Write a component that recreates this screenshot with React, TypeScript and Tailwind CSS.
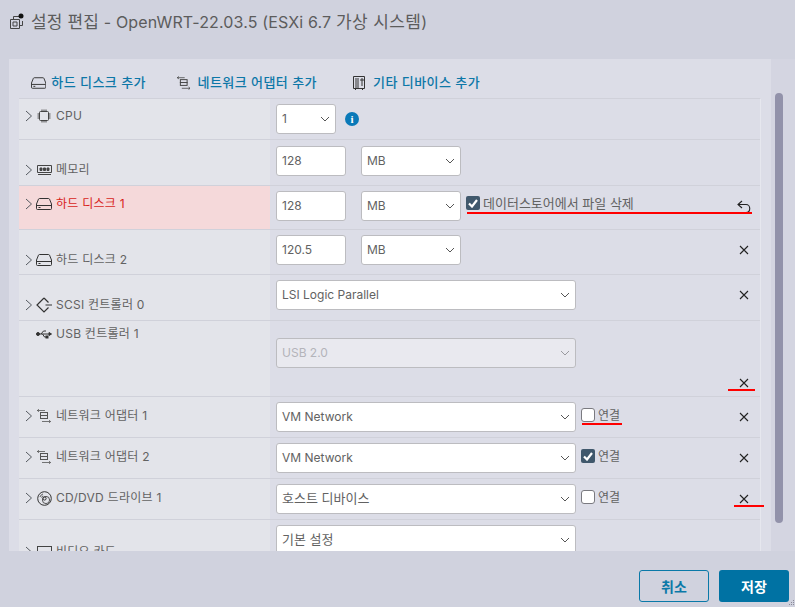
import React from 'react';

const FONT = "font-['Inter','Noto_Sans_CJK_KR',sans-serif]";

const Chevron = () => (
  <svg width="8" height="12" viewBox="0 0 8 12" fill="none" stroke="#555a60" strokeWidth="1" className="shrink-0">
    <path d="M1 1l5.5 5L1 11" />
  </svg>
);

const DiskIcon = ({ size = 16 }: { size?: number }) => (
  <svg width={size} height={size} viewBox="0 0 16 16" fill="none" stroke="#333" strokeWidth="1">
    <path d="M3.5 2.5h9c.5 0 .8.2 1 .6L15.5 8v4.5a1 1 0 0 1-1 1h-13a1 1 0 0 1-1-1V8l2-4.9c.2-.4.5-.6 1-.6z" />
    <path d="M.8 9.5h14.4" />
    <path d="M2.5 11.5h2" />
  </svg>
);

const CpuIcon = () => (
  <svg width="14" height="14" viewBox="0 0 14 14" fill="none" stroke="#444" strokeWidth="1">
    <rect x="2.5" y="2.5" width="9" height="9" rx="1" />
    <path d="M5 .5v2M7 .5v2M9 .5v2M5 11.5v2M7 11.5v2M9 11.5v2M.5 5h2M.5 7h2M.5 9h2M11.5 5h2M11.5 7h2M11.5 9h2" />
  </svg>
);

const MemoryIcon = () => (
  <svg width="15" height="10" viewBox="0 0 15 10" fill="none" stroke="#444" strokeWidth="1">
    <path d="M.5.5h14v7h-14zM1 9.5h13" />
    <path d="M3 3h2v2.5H3zM6.5 3h2v2.5h-2zM10 3h2v2.5h-2z" fill="#444" />
  </svg>
);

const ScsiIcon = () => (
  <svg width="16" height="16" viewBox="0 0 16 16" fill="none" stroke="#333" strokeWidth="1.2">
    <path d="M8 1L1 8l7 7 4.5-4.5M8 1l4.5 4.5M9.5 8H16" />
  </svg>
);

const UsbIcon = () => (
  <svg width="16" height="10" viewBox="0 0 16 10" fill="none" stroke="#333" strokeWidth="1">
    <path d="M2 5h12" />
    <circle cx="2" cy="5" r="1.5" fill="#333" />
    <path d="M13 3.5L15.5 5 13 6.5z" fill="#333" />
    <path d="M5 5l2.5-3H10M6.5 5l2 3h2" />
    <rect x="10" y="7" width="2" height="2" fill="#333" />
  </svg>
);

const NetworkIcon = ({ color = '#555' }: { color?: string }) => (
  <svg width="14" height="14" viewBox="0 0 14 14" fill="none" stroke={color} strokeWidth="1">
    <rect x="3.5" y="3.5" width="7" height="6" />
    <path d="M3 6.5h8" />
    <path d="M0 1.5h8M2 .2L.4 1.5 2 2.8" strokeWidth="0.8" />
    <path d="M5 12.5h8.5M12 11.2l1.6 1.3-1.6 1.3" strokeWidth="0.8" />
  </svg>
);

const DiscIcon = () => (
  <svg width="15" height="15" viewBox="0 0 15 15" fill="none" stroke="#333" strokeWidth="1">
    <circle cx="7.5" cy="7.5" r="6.8" />
    <circle cx="7.5" cy="7.5" r="1.6" />
    <circle cx="9" cy="9" r="3.6" strokeWidth="0.8" />
    <path d="M3 6c.5-1.5 1.5-2.5 3-3M4.5 6.5c.3-.8.8-1.3 1.6-1.6" strokeWidth="0.8" />
  </svg>
);

const MonitorIcon = () => (
  <svg width="15" height="13" viewBox="0 0 15 13" fill="none" stroke="#444" strokeWidth="1">
    <rect x=".5" y=".5" width="14" height="12" />
  </svg>
);

const OtherIcon = () => (
  <svg width="14" height="14" viewBox="0 0 14 14" fill="none" stroke="#333" strokeWidth="1">
    <path d="M1.5.5h11v12h-11zM3 13.5h1M10 13.5h1" />
    <path d="M3 3h4M3 5h4M3 7h4M3 9h4M3 11h4M9 3h2v2H9zM9 7h2M9 9h2" />
  </svg>
);

const CloseIcon = () => (
  <svg width="10" height="10" viewBox="0 0 10 10" stroke="#222" strokeWidth="1.1" fill="none">
    <path d="M1 1l8 8M9 1l-8 8" />
  </svg>
);

const UndoIcon = () => (
  <svg width="14" height="14" viewBox="0 0 14 14" fill="none" stroke="#222" strokeWidth="1.1">
    <path d="M5 1L1 4.5 5 8" />
    <path d="M1 4.5h8c5 0 5 8 0 8" />
  </svg>
);

const Caret = ({ disabled }: { disabled?: boolean }) => (
  <svg width="10" height="6" viewBox="0 0 10 6" fill="none" stroke={disabled ? '#9a9a9f' : '#555'} strokeWidth="1">
    <path d="M1 1l4 4 4-4" />
  </svg>
);

const Select = ({ value, width, disabled, textSize = 'text-[12px]' }: { value: string; width: string; disabled?: boolean; textSize?: string }) => (
  <div
    className={`${width} ${textSize} h-[30px] shrink-0 flex items-center justify-between pl-[5px] pr-[5px] rounded-[3px] border border-[#bcbcc0] ${
      disabled ? 'bg-[#e9e9ef] text-[#b4b4ba]' : 'bg-white text-[#626262]'
    }`}
  >
    <span>{value}</span>
    <Caret disabled={disabled} />
  </div>
);

const Input = ({ value }: { value: string }) => (
  <div className="w-[70px] h-[30px] shrink-0 flex items-center pl-[5px] rounded-[3px] border border-[#bcbcc0] bg-white text-[12px] text-[#626262]">
    {value}
  </div>
);

const Check = ({ checked }: { checked?: boolean }) =>
  checked ? (
    <span className="w-[14px] h-[14px] rounded-[2px] bg-[#40586c] flex items-center justify-center shrink-0">
      <svg width="10" height="9" viewBox="0 0 10 9" fill="none" stroke="#fff" strokeWidth="2.2">
        <path d="M1 4.5l3 3 5-6.5" />
      </svg>
    </span>
  ) : (
    <span className="w-[14px] h-[14px] rounded-[3px] bg-white border border-[#7a7a80] shrink-0" />
  );

const Mark = ({ className }: { className: string }) => <div className={`absolute h-[2px] bg-[#f00] ${className}`} />;

type RowProps = {
  height: string;
  label: string;
  icon: React.ReactNode;
  align?: string;
  noChevron?: boolean;
  red?: boolean;
  action?: React.ReactNode;
  actionClass?: string;
  children: React.ReactNode;
};

const Row = ({ height, label, icon, align = 'items-start', noChevron, red, action, actionClass = 'items-center', children }: RowProps) => (
  <div className={`${height} shrink-0 flex border-b border-[#d0d1da]`}>
    <div className={`w-[251px] shrink-0 flex ${align} pl-[6px] text-[12px] tracking-[.25px] ${red ? 'bg-[#f5d9da] text-[#d81f1a]' : 'bg-[#e3e4ea] text-[#626262]'}`}>
      <div className="flex items-center gap-[3px] h-[16px]">
        <span className="w-[8px] flex justify-center">{noChevron ? null : <Chevron />}</span>
        <span className="w-[16px] flex justify-center">{icon}</span>
        <span className="whitespace-nowrap ml-[1px]">{label}</span>
      </div>
    </div>
    <div className="flex-1 flex pl-[6px] min-w-0">
      {children}
      <div className={`ml-auto w-[32px] flex justify-center ${actionClass}`}>{action}</div>
    </div>
  </div>
);

export default function App() {
  return (
    <div className={`${FONT} relative w-[795px] h-[607px] overflow-hidden flex flex-col bg-[#d0d2de]`}>
      <header className="h-[59px] shrink-0 flex items-start pl-[10px] pt-[12px] gap-[6px] text-[#5c5c5c]">
        <svg width="16" height="16" viewBox="0 0 16 16" fill="none" stroke="#444" strokeWidth="1" className="mt-[1px]">
          <path d="M.5 6.5h9v9h-9zM3.5 6V3.5H9M12.5 8v4.5H10" />
          <circle cx="11" cy="3" r="2.5" fill="#111" stroke="none" />
          <path d="M3 9h4v4H3z" />
        </svg>
        <h1 className="text-[16px] leading-[20px] font-normal whitespace-nowrap tracking-[.15px]">
          <span className="text-[17px] -ml-[1px]">설정 편집</span> - OpenWRT-22.03.5 (ESXi 6.7 <span className="text-[17px] tracking-[.4px]">가상 시스템</span>)
        </h1>
      </header>

      <div className="h-[492px] shrink-0 flex">
        <main className="ml-[9px] w-[762px] h-full overflow-hidden bg-[#dcdde7] pl-[10px] pr-[10px] flex flex-col">
          <div className="h-[39px] shrink-0 flex items-center pl-[12px] pt-[8px] text-[13px] tracking-[.45px] font-medium text-[#0d77a7] whitespace-nowrap">
            <span className="flex items-center gap-[5px] w-[115px]"><DiskIcon />하드 디스크 추가</span>
            <span className="flex items-center gap-[7px] ml-[31px] w-[140px]"><NetworkIcon color="#444" />네트워크 어댑터 추가</span>
            <span className="flex items-center gap-[7px] ml-[35px]"><OtherIcon />기타 디바이스 추가</span>
          </div>
          <div className="border-t border-r border-t-[#d0d1da] border-r-[#e6e7ee] flex flex-col">
            <Row height="h-[41px]" label="CPU" icon={<CpuIcon />} align="items-start pt-[9px]">
              <div className="flex items-center gap-[9px] pt-[5px] h-[35px]">
                <Select value="1" width="w-[60px]" />
                <span className="w-[14px] h-[14px] rounded-full bg-[#0a79b8] text-white text-[11px] font-bold leading-none flex items-center justify-center font-['Liberation_Serif',serif]">i</span>
              </div>
            </Row>
            <Row height="h-[46px]" label="메모리" icon={<MemoryIcon />} align="items-end pb-[7px]">
              <div className="flex gap-[15px] pt-[6px]">
                <Input value="128" />
                <Select value="MB" width="w-[100px]" />
              </div>
            </Row>
            <Row height="h-[44px]" label="하드 디스크 1" icon={<DiskIcon />} red align="items-start pt-[10px]" action={<span className="relative -top-[1px]"><UndoIcon /></span>}>
              <div className="flex gap-[15px] pt-[5px] items-start">
                <Input value="128" />
                <div className="flex items-start gap-[5px]">
                  <Select value="MB" width="w-[100px]" />
                  <div className="flex items-center gap-[3px] pt-[2px] text-[13px] text-[#626262] whitespace-nowrap">
                    <Check checked />
                    <span className="mt-[1px]">데이터스토어에서 파일 삭제</span>
                  </div>
                </div>
              </div>
            </Row>
            <Row height="h-[45px]" label="하드 디스크 2" icon={<DiskIcon />} align="items-end pb-[6px]" action={<CloseIcon />} actionClass="items-center pb-[5px]">
              <div className="flex gap-[15px] pt-[5px]">
                <Input value="120.5" />
                <Select value="MB" width="w-[100px]" />
              </div>
            </Row>
            <Row height="h-[46px]" label="SCSI 컨트롤러 0" icon={<ScsiIcon />} align="items-end pb-[7px]" action={<CloseIcon />} actionClass="items-center pb-[5px]">
              <div className="pt-[5px]">
                <Select value="LSI Logic Parallel" width="w-[300px]" />
              </div>
            </Row>
            <Row height="h-[76px]" label="USB 컨트롤러 1" icon={<UsbIcon />} noChevron align="items-start pt-[5px]" action={<CloseIcon />} actionClass="items-end pb-[8px]">
              <div className="pt-[17px]">
                <Select value="USB 2.0" width="w-[300px]" disabled />
              </div>
            </Row>
            {[
              { label: '네트워크 어댑터 1', icon: <NetworkIcon />, value: 'VM Network', checked: false, size: 'text-[12px]' },
              { label: '네트워크 어댑터 2', icon: <NetworkIcon />, value: 'VM Network', checked: true, size: 'text-[12px]' },
              { label: 'CD/DVD 드라이브 1', icon: <DiscIcon />, value: '호스트 디바이스', checked: false, size: 'text-[13px]' },
            ].map((r) => (
              <Row key={r.label} height="h-[41px]" label={r.label} icon={r.icon} align="items-start pt-[11px]" action={<CloseIcon />}>
                <div className="flex items-center gap-[5px] h-[40px] pb-[1px]">
                  <Select value={r.value} width="w-[300px]" textSize={r.size} />
                  <div className="flex items-center gap-[3px] -mt-[3px]">
                    <Check checked={r.checked} />
                    <span className="text-[12px] text-[#626262] mt-[1px]">연결</span>
                  </div>
                </div>
              </Row>
            ))}
            <Row height="h-[60px]" label="비디오 카드" icon={<MonitorIcon />} align="items-start pt-[24px]">
              <div className="pt-[5px]">
                <Select value="기본 설정" width="w-[300px]" textSize="text-[13px]" />
              </div>
            </Row>
          </div>
        </main>
        <div className="flex-1 relative bg-[#d4d5e1]">
          <div className="absolute left-[4px] top-[34px] w-[8px] h-[430px] rounded-b-[4px] rounded-t-[4px] bg-[#9292aa]" />
        </div>
      </div>

      <footer className="flex-1 flex justify-end items-start gap-[10px] pt-[19px] pr-[6px]">
        <button className="w-[70px] h-[32px] rounded-[3px] border border-[#0a79a8] text-[#0a79a8] text-[14px] font-semibold">취소</button>
        <button className="w-[70px] h-[32px] rounded-[3px] bg-[#0072a3] text-white text-[14px] font-semibold">저장</button>
      </footer>

      {/* resize grip in the corner */}
      <svg width="6" height="7" viewBox="0 0 6 7" fill="#8a8a98" className="absolute right-0 bottom-0">
        <path d="M4 0h1v1H4zM2 2h1v1H2zM4 2h1v1H4zM0 4h1v1H0zM2 4h1v1H2zM4 4h1v1H4z" />
      </svg>

      {/* red annotation lines drawn over the screenshot */}
      <Mark className="left-[467px] top-[212px] w-[285px]" />
      <Mark className="left-[728px] top-[389px] w-[27px]" />
      <Mark className="left-[582px] top-[423px] w-[40px]" />
      <Mark className="left-[734px] top-[505px] w-[30px]" />
    </div>
  );
}
